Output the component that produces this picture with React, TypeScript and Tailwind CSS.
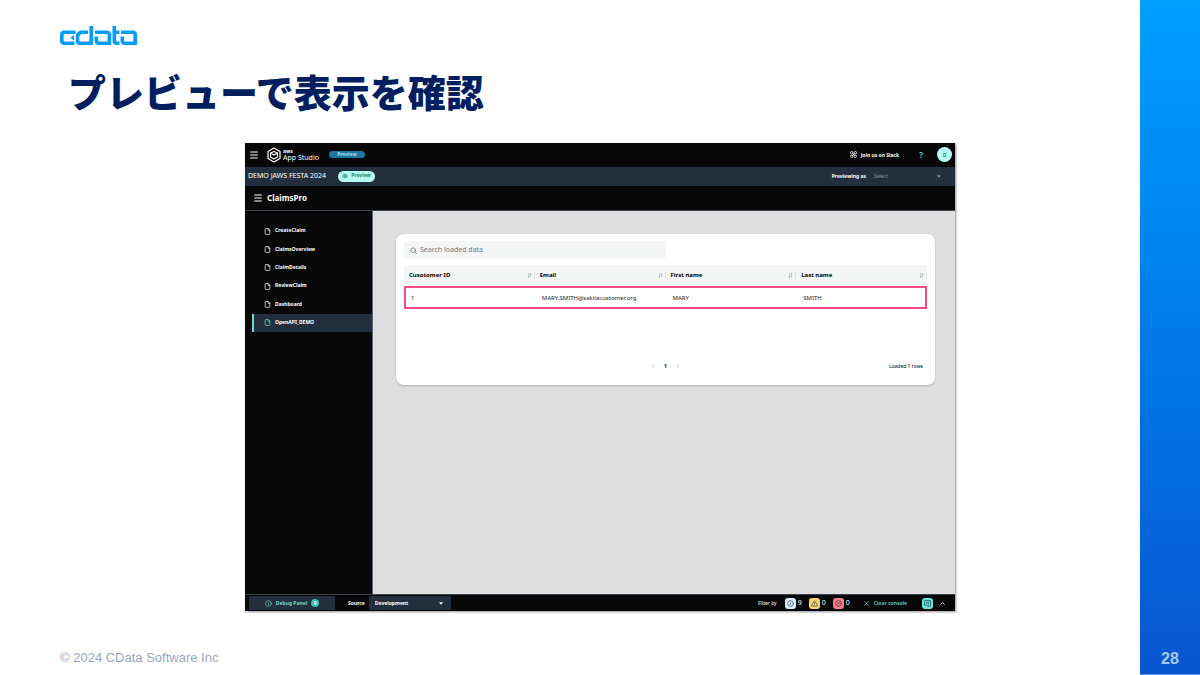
import React from "react";
import {
  ChevronLeft,
  ChevronRight,
  ChevronUp,
  CircleX,
  Eye,
  File,
  Info,
  Menu,
  Search,
  TriangleAlert,
  X,
} from "lucide-react";

const pages = [
  "CreateClaim",
  "ClaimsOverview",
  "ClaimDetails",
  "ReviewClaim",
  "Dashboard",
  "OpenAPI_DEMO",
];

const columns = ["Cusotomer ID", "Email", "First name", "Last name"];

const rows = [["1", "MARY.SMITH@sakilacustomer.org", "MARY", "SMITH"]];

const CDataLogo = () => (
  <svg
    viewBox="0 0 77 19"
    className="h-[19px] w-[77px]"
    fill="none"
    stroke="#009dff"
    strokeWidth="3.6"
    role="img"
    aria-label="CData"
  >
    <path d="M15.500 6.300H4.500Q1.800 6.300 1.800 9V14.500Q1.800 17.200 4.500 17.200H14.500" />
    <path d="M28 6.300H20.500L17.500 9.300V14.500Q17.500 17.200 20 17.200H31.200V0" />
    <path d="M35 6.300H46.500Q49.400 6.300 49.400 9V19M49.400 17.200H39Q36.300 17.200 36.300 14.500V10.500" />
    <path d="M54.300 0V14.500Q54.300 17.200 57 17.200H59.500M54 6.300H59.500" />
    <path d="M61 6.300H72.500Q75.200 6.300 75.200 9V19M75.200 17.200H65Q62.300 17.200 62.300 14.500V10.500" />
    <path d="M14 8.700V14.700L10.500 11.700Z" fill="#009dff" stroke="none" />
  </svg>
);

const StudioLogo = () => (
  <svg
    viewBox="0 0 16 16"
    className="h-4 w-4"
    fill="none"
    stroke="white"
    strokeWidth="1.2"
    strokeLinejoin="round"
    aria-hidden="true"
  >
    <path d="M8 1L14 4.500V11.500L8 15L2 11.500V4.500Z" />
    <path d="M4.500 6L8 4.500L11.500 6L8 8Z" />
    <path d="M4.500 6V10L8 12L11.500 10V6" />
  </svg>
);

const SlackIcon = () => (
  <svg
    viewBox="0 0 12 12"
    className="h-[7px] w-[7px]"
    fill="none"
    stroke="currentColor"
    strokeWidth="1.4"
    aria-hidden="true"
  >
    <rect x="1" y="1" width="4" height="4" rx="1.500" />
    <rect x="7" y="1" width="4" height="4" rx="1.500" />
    <rect x="1" y="7" width="4" height="4" rx="1.500" />
    <rect x="7" y="7" width="4" height="4" rx="1.500" />
    <path d="M4 4L8 8M8 4L4 8" />
  </svg>
);

const SortIcon = () => (
  <svg
    viewBox="0 0 10 10"
    className="h-[5px] w-[5px]"
    fill="none"
    stroke="#8d949e"
    strokeWidth="1"
    aria-hidden="true"
  >
    <path d="M3 1V9M1 7L3 9L5 7M7 9V1M5.500 2.500L7 1L9 3" />
  </svg>
);

const Caret = () => (
  <svg viewBox="0 0 6 4" className="h-[3px] w-1" aria-hidden="true">
    <path d="M0 0H6L3 4Z" fill="currentColor" />
  </svg>
);

const TopBar = () => (
  <header className="flex h-6 items-center bg-[#080808] pr-[3px] pb-[1px] pl-1 text-white">
    <button aria-label="Open menu" className="mr-[7px]">
      <Menu className="h-[10px] w-[10px]" strokeWidth={2.5} />
    </button>
    <StudioLogo />
    <div className="ml-[1px] flex flex-col">
      <span className="text-[5px] leading-[5px] font-bold">aws</span>
      <span className="text-[7px] leading-[7px]">App Studio</span>
    </div>
    <span className="ml-[10px] w-9 rounded-full bg-[#1b779f] text-center text-[5px] leading-[7px] font-bold text-[#a9dcec]">
      Preview
    </span>
    <a href="#slack" className="ml-auto flex items-center gap-1 text-[5px] leading-[8px] font-bold">
      <SlackIcon />
      Join us on Slack
    </a>
    <button aria-label="Help" className="ml-5 text-[8px] leading-[8px] font-bold text-[#5fbdb9]">
      ?
    </button>
    <button className="ml-[14px] flex h-[15px] w-[15px] items-center justify-center rounded-full bg-[#b5fdf3] text-[5px] leading-[8px] font-bold text-[#2f8f8a]">
      D
    </button>
  </header>
);

const PreviewBar = () => (
  <div className="flex h-[19px] items-center bg-[#232f3e] pr-[14px] pb-[1px] pl-[3px] text-white">
    <span className="text-[7px] leading-[10px]">DEMO JAWS FESTA 2024</span>
    <button className="ml-3 flex h-[11px] w-[37px] items-center justify-center gap-[3px] rounded-full bg-[#b5fdf3] text-[5px] font-bold text-[#23807c]">
      <Eye className="h-[6px] w-[6px]" strokeWidth={3} />
      Preview
    </button>
    <label htmlFor="previewing" className="ml-auto text-[5px] leading-[8px] font-bold">
      Previewing as
    </label>
    <div className="ml-2 flex w-[67px] items-center justify-between text-[#8d99a8]">
      <select id="previewing" className="w-14 appearance-none text-[5px] leading-[8px]">
        <option>Select</option>
      </select>
      <Caret />
    </div>
  </div>
);

const SideNav = () => (
  <nav className="w-32 shrink-0 border-r border-[#5b6577] bg-[#080808] pt-[11px] pl-[7px]">
    <ul className="grid h-[110px] auto-rows-fr">
      {pages.map((page) => {
        const active = page === "OpenAPI_DEMO";
        return (
          <li key={page} className="flex">
            <a
              href={`#${page}`}
              className={`flex flex-1 items-center gap-1 border-l-2 pl-[10px] text-[5px] font-bold text-white ${
                active ? "border-[#6fd9cf] bg-[#232f3e]" : "border-transparent"
              }`}
            >
              <File
                className={`h-[7px] w-[7px] ${active ? "text-[#6fd9cf]" : "text-white"}`}
                strokeWidth={2.5}
              />
              {page}
            </a>
          </li>
        );
      })}
    </ul>
  </nav>
);

const DataCard = () => (
  <section className="rounded-lg bg-white px-2 pt-[7px] pb-[14px] shadow-[0_1px_2px_rgba(0,0,0,0.2)]">
    <label className="flex h-[18px] w-1/2 items-center gap-[3px] rounded-[3px] bg-[#f4f6f6] pl-[6px]">
      <Search className="h-[7px] w-[7px] text-[#5f6b7a]" strokeWidth={2.5} />
      <input
        aria-label="Search loaded data"
        placeholder="Search loaded data"
        className="flex-1 text-[7px] leading-[10px] outline-none placeholder:text-[#6b7684]"
      />
    </label>
    <table className="mt-[6px] w-full table-fixed border-separate border-spacing-0 text-left">
      <thead>
        <tr className="h-[21px] bg-[#f4f6f6]">
          {columns.map((column) => (
            <th key={column} scope="col" className="p-0 align-middle">
              <div className="flex h-[7px] items-center justify-between border-r border-[#dde1e5] pr-[2px] pl-[5px] text-[6px] leading-[7px] font-bold text-black">
                {column}
                <SortIcon />
              </div>
            </th>
          ))}
        </tr>
      </thead>
      <tbody>
        {rows.map((row) => (
          <tr key={row[0]} className="h-[23px] outline-2 -outline-offset-2 outline-[#f74a81]">
            {row.map((cell) => (
              <td key={cell} className="py-0 pr-0 pl-[7px] align-middle text-[6px] leading-[8px] text-[#222]">
                {cell}
              </td>
            ))}
          </tr>
        ))}
      </tbody>
    </table>
    <div className="mt-[52px] grid grid-cols-3 items-center text-[5px] leading-[10px] text-black">
      <div className="col-start-2 flex items-center justify-center gap-2">
        <button aria-label="Previous page">
          <ChevronLeft className="h-[6px] w-[6px] text-[#8d99a8]" />
        </button>
        <button className="font-bold">1</button>
        <button aria-label="Next page">
          <ChevronRight className="h-[6px] w-[6px] text-[#8d99a8]" />
        </button>
      </div>
      <span className="pr-1 text-right">Loaded 1 rows</span>
    </div>
  </section>
);

const DebugBar = () => (
  <footer className="flex h-[17px] items-center border-t border-[#3a4352] bg-[#080808] pr-[9px] pl-1 text-[5px] leading-[8px] font-bold text-white">
    <button className="flex h-[14px] w-[86px] items-center justify-center gap-1 bg-[#232f3e] text-[#6fd9cf]">
      <Info className="h-[7px] w-[7px]" />
      Debug Panel
      <span className="h-2 w-2 rounded-full bg-[#2cc5b5] text-center text-white">9</span>
    </button>
    <label htmlFor="source" className="ml-[13px]">
      Source
    </label>
    <div className="ml-1 flex h-[14px] w-[82px] items-center justify-between rounded-[2px] bg-[#232f3e] pr-2 pl-[6px]">
      <select id="source" className="w-14 appearance-none">
        <option>Development</option>
      </select>
      <Caret />
    </div>
    <span className="ml-auto font-normal">Filter by</span>
    <div className="ml-2 flex gap-[7px] text-[7px] font-normal">
      <button className="flex items-center gap-[2px]">
        <span className="rounded-[3px] bg-[#d9ecff] p-[2px] text-[#232f3e]">
          <Info className="h-[7px] w-[7px]" />
        </span>
        9
      </button>
      <button className="flex items-center gap-[2px]">
        <span className="rounded-[3px] bg-[#f8d66d] p-[2px] text-[#232f3e]">
          <TriangleAlert className="h-[7px] w-[7px]" />
        </span>
        0
      </button>
      <button className="flex items-center gap-[2px]">
        <span className="rounded-[3px] bg-[#ee7f8b] p-[2px] text-[#5a1420]">
          <CircleX className="h-[7px] w-[7px]" />
        </span>
        0
      </button>
    </div>
    <button className="ml-[13px] flex items-center gap-1 text-[#5fbdb9]">
      <X className="h-[7px] w-[7px]" strokeWidth={3} />
      Clear console
    </button>
    <button aria-label="Dock panel" className="ml-[15px] rounded-[3px] bg-[#6be3da] p-[2px] text-[#1c5f5d]">
      <svg viewBox="0 0 12 12" className="h-[7px] w-[7px]" fill="none" stroke="currentColor" strokeWidth="1.4">
        <path d="M1 1H11V11H7L5 9H1ZM3.500 4H8.500M3.500 6.500H6M8 6V9" />
      </svg>
    </button>
    <button aria-label="Expand panel" className="ml-[6px]">
      <ChevronUp className="h-[7px] w-[7px]" strokeWidth={3} />
    </button>
  </footer>
);

const App = () => {
  return (
    <div className="flex min-h-screen bg-white">
      <main className="flex flex-1 flex-col pt-[26px] pl-[60px]">
        <CDataLogo />
        <h1 className="mt-[18px] ml-2 font-['Noto_Sans_CJK_JP',sans-serif] text-[38px] leading-[56px] font-black text-[#001f60]">
          プレビューで表示を確認
        </h1>
        <div className="mx-[185px] mt-6 flex flex-1 flex-col font-['Noto_Sans',sans-serif] shadow-[1px_1px_2px_rgba(0,0,0,0.45)]">
          <TopBar />
          <PreviewBar />
          <div className="flex h-[25px] items-center gap-1 border-b border-[#3a4352] bg-[#080808] pl-2 text-white">
            <button aria-label="Toggle navigation">
              <Menu className="h-[10px] w-[10px]" strokeWidth={2.5} />
            </button>
            <span className="text-[8px] leading-[10px] font-bold">ClaimsPro</span>
          </div>
          <div className="flex flex-1">
            <SideNav />
            <div className="flex-1 bg-[#dedede] pt-[23px] pr-5 pl-[23px]">
              <DataCard />
            </div>
          </div>
          <DebugBar />
        </div>
        <p className="mt-[38px] mb-2 font-['Liberation_Sans',sans-serif] text-[13px] leading-[18px] text-[#99a5bf]">
          © 2024 CData Software Inc
        </p>
      </main>
      <aside className="flex w-[60px] shrink-0 items-end justify-center border-b border-[#6b9be4] bg-linear-to-b from-[#009fff] to-[#0a56d0] pb-[6px] font-['Liberation_Sans',sans-serif] text-[16px] leading-[18px] font-bold text-[#a9c6f0]">
        28
      </aside>
    </div>
  );
};

export default App;
